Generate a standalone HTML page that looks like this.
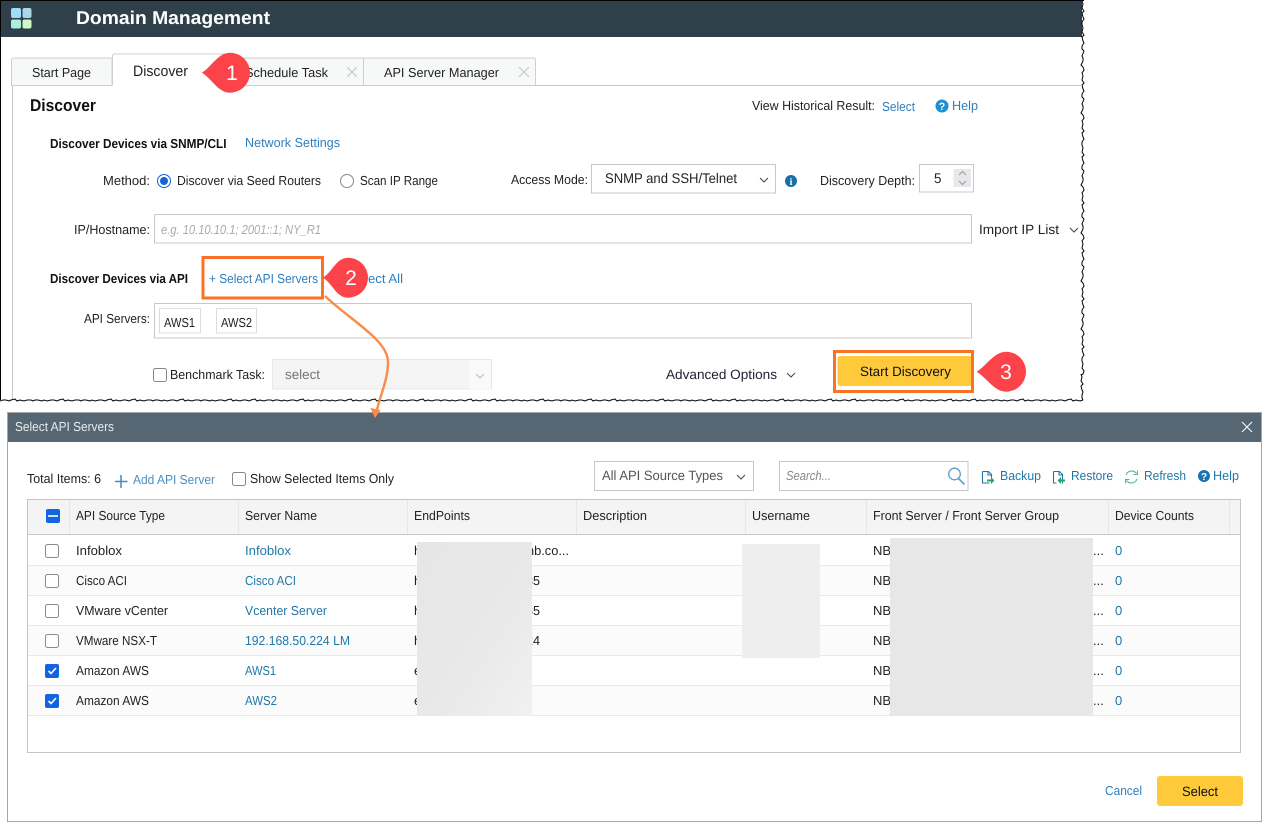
<!DOCTYPE html>
<html><head><meta charset="utf-8"><title>Domain Management</title>
<style>
html,body{margin:0;padding:0;background:#fff;width:1262px;height:822px;overflow:hidden}
svg{display:block}
text{font-family:"Liberation Sans",Arial,sans-serif;font-size:13px;fill:#222;white-space:pre;text-rendering:geometricPrecision}
.b{font-weight:bold;fill:#111}
.l{fill:#2f7fbf}
.d{fill:#1f78a8}
.g{fill:#555}
.n{font-size:21px;fill:#fff}
</style></head><body>
<svg width="1262" height="822" viewBox="0 0 1262 822" xmlns="http://www.w3.org/2000/svg">
<defs>
<linearGradient id="m1" x1="0" y1="0" x2="1" y2="1"><stop offset="0" stop-color="#e6e6e6"/><stop offset="0.6" stop-color="#e9e9e9"/><stop offset="1" stop-color="#f1f1f1"/></linearGradient>
</defs>
<rect width="1262" height="822" fill="#fff"/>
<!-- top bar -->
<rect x="1" y="1" width="1081" height="36" fill="#2f404b"/>
<rect x="0" y="0" width="1084" height="1" fill="#000"/>
<rect x="0" y="0" width="1" height="400" fill="#000"/>
<rect x="11" y="8" width="10" height="10" rx="2" fill="#9fdcf5"/>
<rect x="22.500" y="8" width="9" height="10" rx="2" fill="#a9d6e8"/>
<rect x="11" y="19.500" width="10" height="9" rx="2" fill="#aef0e0"/>
<rect x="22.500" y="19.500" width="9" height="9" rx="2" fill="#cff7c8"/>
<text x="76" y="24" textLength="194" lengthAdjust="spacingAndGlyphs" style="font-size:18.500px;font-weight:bold;fill:#fff">Domain Management</text>
<!-- jagged edges -->
<path fill="none" stroke="#000" stroke-width="1" d="M1082 1l1 3-1 4 2 3-2 2 1 4 1 2-2 3 0 3l1 3-1 4 2 3-2 2 1 4 1 2-2 3 0 3l2 2-2 5 1 2 0 3-2 4 2 2 1 3-2 3l1 3-1 4 2 3-2 2 1 4 1 2-2 3 0 3l2 2-2 5 1 2 0 3-2 4 2 2 1 3-2 3l1 3-1 4 2 3-2 2 1 4 1 2-2 3 0 3l1 3-1 4 2 3-2 2 1 4 1 2-2 3 0 3l2 2-2 5 1 2 0 3-2 4 2 2 1 3-2 3l1 3-1 4 2 3-2 2 1 4 1 2-2 3 0 3l2 2-2 5 1 2 0 3-2 4 2 2 1 3-2 3l1 3-1 4 2 3-2 2 1 4 1 2-2 3 0 3l2 2-2 5 1 2 0 3-2 4 2 2 1 3-2 3l1 3-1 4 2 3-2 2 1 4 1 2-2 3 0 3l2 2-2 5 1 2 0 3-2 4 2 2 1 3-2 3l1 3-1 4 2 3-2 2 1 4 1 2-2 3 0 3l1 3-1 4 2 3-1 3-2 1"/>
<path fill="none" stroke="#000" stroke-width="1" d="M1081 374l1 3-1 4 2 3-2 2 1 4 1 2-1 3 0 3 1 2"/>
<path fill="none" stroke="#000" stroke-width="1" d="M1083 400l-3 1-4-1-3 1-2-2-4 1-2 1-3-1-3 0l-4 1-3-1-2 1-4-1-3 0-2 1-2-1-4 0l-3 1-4-1-3 1-2-2-4 1-2 1-3-1-3 0l-4 1-3-1-2 1-4-1-3 0-2 1-2-1-4 0l-3 1-4-1-3 1-2-2-4 1-2 1-3-1-3 0l-3 1-4-1-3 1-2-2-4 1-2 1-3-1-3 0l-4 1-3-1-2 1-4-1-3 0-2 1-2-1-4 0l-3 1-4-1-3 1-2-2-4 1-2 1-3-1-3 0l-4 1-3-1-2 1-4-1-3 0-2 1-2-1-4 0l-3 1-4-1-3 1-2-2-4 1-2 1-3-1-3 0l-3 1-4-1-3 1-2-2-4 1-2 1-3-1-3 0l-4 1-3-1-2 1-4-1-3 0-2 1-2-1-4 0l-3 1-4-1-3 1-2-2-4 1-2 1-3-1-3 0l-4 1-3-1-2 1-4-1-3 0-2 1-2-1-4 0l-3 1-4-1-3 1-2-2-4 1-2 1-3-1-3 0l-3 1-4-1-3 1-2-2-4 1-2 1-3-1-3 0l-4 1-3-1-2 1-4-1-3 0-2 1-2-1-4 0l-3 1-4-1-3 1-2-2-4 1-2 1-3-1-3 0l-4 1-3-1-2 1-4-1-3 0-2 1-2-1-4 0l-3 1-4-1-3 1-2-2-4 1-2 1-3-1-3 0"/>
<path fill="none" stroke="#000" stroke-width="1" d="M603 400l-3 1-4-1-3 1-2-2-4 1-2 1-3-1-3 0l-4 1-3-1-2 1-4-1-3 0-2 1-2-1-4 0l-3 1-4-1-3 1-2-2-4 1-2 1-3-1-3 0l-4 1-3-1-2 1-4-1-3 0-2 1-2-1-4 0l-3 1-4-1-3 1-2-2-4 1-2 1-3-1-3 0l-3 1-4-1-3 1-2-2-4 1-2 1-3-1-3 0l-4 1-3-1-2 1-4-1-3 0-2 1-2-1-4 0l-3 1-4-1-3 1-2-2-4 1-2 1-3-1-3 0l-4 1-3-1-2 1-4-1-3 0-2 1-2-1-4 0l-3 1-4-1-3 1-2-2-4 1-2 1-3-1-3 0l-3 1-4-1-3 1-2-2-4 1-2 1-3-1-3 0l-4 1-3-1-2 1-4-1-3 0-2 1-2-1-4 0l-3 1-4-1-3 1-2-2-4 1-2 1-3-1-3 0l-4 1-3-1-2 1-4-1-3 0-2 1-2-1-4 0l-3 1-4-1-3 1-2-2-4 1-2 1-3-1-3 0l-3 1-4-1-3 1-2-2-4 1-2 1-3-1-3 0l-4 1-3-1-2 1-4-1-3 0-2 1-2-1-4 0l-3 1-4-1-3 1-2-2-4 1-2 1-3-1-3 0l-4 1-3-1-2 1-4-1-3 0-2 1-2-1-4 0l-3 1-4-1-3 1-2-2-4 1-2 1-3-1-3 0"/>
<path fill="none" stroke="#000" stroke-width="1" d="M123 400l-3 1-4-1-3 1-2-2-4 1-2 1-3-1-3 0l-4 1-3-1-2 1-4-1-3 0-2 1-2-1-4 0l-3 1-4-1-3 1-2-2-4 1-2 1-3-1-3 0l-4 1-3-1-2 1-4-1-3 0-2 1-2-1-4 0l-3 1-4-1-3 1-2-2-4 1-2 1-3-1-3 0l-3 1-4-1-3 1-2-2-4 1-2 1-3-1-3 0l-4 1-3-1-2 1-4-1-3 0-2 1-2-1-4 0"/>
<!-- panel -->
<path d="M12.500 399V85.500H1082" fill="none" stroke="#c8c8c8"/>
<!-- tabs -->
<path d="M11.500 85.500V60a2 2 0 0 1 2-2H112V85.500Z" fill="#f7f8f8" stroke="#cfcfcf"/>
<path d="M225 85.500V60a2 2 0 0 1 2-2H363.500V85.500Z" fill="#f7f8f8" stroke="#cfcfcf"/>
<path d="M363.500 85.500V58H533a2 2 0 0 1 2.500 2V85.500Z" fill="#f7f8f8" stroke="#cfcfcf"/>
<path d="M112.500 86V56a2 2 0 0 1 2-2H224a1.500 1.500 0 0 1 1 2V86Z" fill="#fff" stroke="none"/>
<path d="M112.500 85.500V56a2 2 0 0 1 2-2H223a2 2 0 0 1 2 2V85.500" fill="none" stroke="#cfcfcf"/>
<text x="32" y="77" textLength="59" lengthAdjust="spacingAndGlyphs">Start Page</text>
<text x="133" y="76" textLength="55" lengthAdjust="spacingAndGlyphs" style="font-size:15px">Discover</text>
<text x="245" y="77" textLength="83" lengthAdjust="spacingAndGlyphs">Schedule Task</text>
<text x="384" y="77" textLength="115" lengthAdjust="spacingAndGlyphs">API Server Manager</text>
<path d="M347 67l10 10M357 67l-10 10M519 67l10 10M529 67l-10 10" stroke="#c4c4c4" fill="none"/>
<!-- heading row -->
<text class="b" x="30" y="111" textLength="66" lengthAdjust="spacingAndGlyphs" style="font-size:17px">Discover</text>
<text x="752" y="110" textLength="123" lengthAdjust="spacingAndGlyphs">View Historical Result:</text>
<text class="l" x="882" y="111" textLength="33" lengthAdjust="spacingAndGlyphs">Select</text>
<circle cx="942" cy="106" r="6.500" fill="#1f90d0"/>
<text x="942" y="110" text-anchor="middle" style="font-size:10.500px;font-weight:bold;fill:#fff">?</text>
<text class="l" x="952" y="110" textLength="26" lengthAdjust="spacingAndGlyphs">Help</text>
<!-- SNMP -->
<text class="b" x="50" y="148" textLength="176.500" lengthAdjust="spacingAndGlyphs">Discover Devices via SNMP/CLI</text>
<text class="l" x="245" y="147" textLength="95" lengthAdjust="spacingAndGlyphs">Network Settings</text>
<text x="103" y="185" textLength="47" lengthAdjust="spacingAndGlyphs">Method:</text>
<circle cx="164" cy="181" r="6.500" fill="#fff" stroke="#1264d8"/>
<circle cx="164" cy="181" r="4" fill="#1264d8"/>
<text x="177" y="185" textLength="144" lengthAdjust="spacingAndGlyphs">Discover via Seed Routers</text>
<circle cx="347" cy="181" r="6.500" fill="#fff" stroke="#888"/>
<text x="360" y="185" textLength="78" lengthAdjust="spacingAndGlyphs">Scan IP Range</text>
<text x="511" y="184" textLength="77" lengthAdjust="spacingAndGlyphs">Access Mode:</text>
<rect x="591.500" y="164.500" width="184" height="28.500" fill="#fff" stroke="#c8c8c8"/>
<text x="605" y="183" textLength="132" lengthAdjust="spacingAndGlyphs" style="font-size:14px">SNMP and SSH/Telnet</text>
<path d="M760 178l4 4 4-4" fill="none" stroke="#444"/>
<circle cx="791" cy="181" r="6" fill="#1a6fa8"/>
<text x="791" y="185" text-anchor="middle" style="font-size:10px;font-weight:bold;fill:#fff;font-family:'Liberation Serif',serif">i</text>
<text x="820" y="185" textLength="95" lengthAdjust="spacingAndGlyphs">Discovery Depth:</text>
<rect x="919.500" y="164.500" width="54" height="27.500" fill="#fff" stroke="#c8c8c8"/>
<text x="934" y="183" textLength="7.500" lengthAdjust="spacingAndGlyphs" style="font-size:14px">5</text>
<rect x="953.500" y="169" width="17.500" height="18" fill="#e8e8ec"/>
<path d="M959 175l3.500-3.500 3.500 3.500M959 181l3.500 3.500 3.500-3.500" fill="none" stroke="#999"/>
<text x="74" y="234" textLength="76" lengthAdjust="spacingAndGlyphs">IP/Hostname:</text>
<rect x="154.500" y="214.500" width="817" height="28.500" fill="#fff" stroke="#c8c8c8"/>
<text x="161" y="234" textLength="160" lengthAdjust="spacingAndGlyphs" style="font-style:italic;fill:#aaa">e.g. 10.10.10.1; 2001::1; NY_R1</text>
<text x="979" y="234" textLength="80" lengthAdjust="spacingAndGlyphs" style="font-size:13.500px">Import IP List</text>
<path d="M1070 228l4 4 4-4" fill="none" stroke="#444"/>
<!-- API -->
<text class="b" x="50" y="283" textLength="138" lengthAdjust="spacingAndGlyphs">Discover Devices via API</text>
<text class="l" x="209" y="283" textLength="109" lengthAdjust="spacingAndGlyphs">+ Select API Servers</text>
<text class="l" x="368" y="283" textLength="35" lengthAdjust="spacingAndGlyphs">ect All</text>
<rect x="203" y="257.500" width="119.500" height="40.500" fill="none" stroke="#f97226" stroke-width="3"/>
<text x="84" y="323" textLength="66" lengthAdjust="spacingAndGlyphs">API Servers:</text>
<rect x="154.500" y="303.500" width="817" height="34.500" fill="#fff" stroke="#c8c8c8"/>
<rect x="159.500" y="308.500" width="41" height="24.500" fill="#fff" stroke="#ddd"/>
<text x="164" y="327" textLength="31" lengthAdjust="spacingAndGlyphs">AWS1</text>
<rect x="216.500" y="308.500" width="40" height="24.500" fill="#fff" stroke="#ddd"/>
<text x="221" y="327" textLength="31" lengthAdjust="spacingAndGlyphs">AWS2</text>
<rect x="153.500" y="368.500" width="13" height="13" rx="2" fill="#fff" stroke="#888"/>
<text x="170" y="379" textLength="95" lengthAdjust="spacingAndGlyphs">Benchmark Task:</text>
<rect x="272.500" y="359.500" width="219" height="29.500" fill="#f5f5f5" stroke="#e8e8e8"/>
<rect x="470" y="360" width="21" height="29" fill="#fafafa"/>
<text x="285" y="379" textLength="35" lengthAdjust="spacingAndGlyphs" style="fill:#777;font-size:13.500px">select</text>
<path d="M476 374l4 4 4-4" fill="none" stroke="#bbb"/>
<text x="666" y="379" textLength="111" lengthAdjust="spacingAndGlyphs" style="fill:#223;font-size:13.500px">Advanced Options</text>
<path d="M787 373l4 4 4-4" fill="none" stroke="#444"/>
<path d="M837.500 359a3 3 0 0 1 3-3H971V386H840.500a3 3 0 0 1-3-3Z" fill="#ffc93c"/>
<text x="860" y="376" textLength="91" lengthAdjust="spacingAndGlyphs" style="fill:#111;font-size:13.500px">Start Discovery</text>
<rect x="834.500" y="351.500" width="138" height="40" fill="none" stroke="#f97226" stroke-width="3"/>
<!-- dialog -->
<rect x="7.500" y="412.500" width="1254" height="409" fill="#fff" stroke="#a6a6a6"/>
<rect x="8" y="413" width="1253" height="29" fill="#566773"/>
<text x="15" y="431" textLength="99" lengthAdjust="spacingAndGlyphs" style="fill:#e6ebee">Select API Servers</text>
<path d="M1242 422l10 10M1252 422l-10 10" stroke="#fff" fill="none"/>
<text x="27" y="483" textLength="74" lengthAdjust="spacingAndGlyphs">Total Items: 6</text>
<path d="M121 475v13M115 481.500h12.500" stroke="#3d8cc4" stroke-width="1.500" fill="none"/>
<text class="l" x="133" y="484" textLength="82" lengthAdjust="spacingAndGlyphs" style="fill:#4a90c4">Add API Server</text>
<rect x="232.500" y="472.500" width="13" height="13" rx="2" fill="#fff" stroke="#888"/>
<text x="250" y="483" textLength="144" lengthAdjust="spacingAndGlyphs">Show Selected Items Only</text>
<rect x="594.500" y="461.500" width="159" height="29" fill="#fff" stroke="#c8c8c8"/>
<text class="g" x="602" y="480" textLength="121" lengthAdjust="spacingAndGlyphs" style="font-size:13.500px">All API Source Types</text>
<path d="M737 475l4 4 4-4" fill="none" stroke="#444"/>
<rect x="779.500" y="461.500" width="188.500" height="29" fill="#fff" stroke="#c8c8c8"/>
<text x="786" y="480" textLength="45" lengthAdjust="spacingAndGlyphs" style="font-style:italic;fill:#888">Search...</text>
<circle cx="954.500" cy="474" r="5.800" fill="none" stroke="#5c9ccb" stroke-width="1.300"/>
<path d="M958.500 478.500l6 6" stroke="#5c9ccb" stroke-width="1.600"/>
<!-- backup / restore / refresh -->
<path d="M982.500 471.500h6l3 3v3M982.500 471.500v11.500h7M988 471.500v3.500h3.500" fill="none" stroke="#1f78a8" stroke-width="1.100"/>
<path d="M987 479.500h4v-2.500l3.500 3.500-3.500 3.500v-2.500h-4Z" fill="#2aa55c"/>
<text class="d" x="1000" y="480" textLength="41" lengthAdjust="spacingAndGlyphs">Backup</text>
<path d="M1053.500 471.500h6l3 3v9M1053.500 471.500v11.500h3M1059 471.500v3.500h3.500" fill="none" stroke="#1f78a8" stroke-width="1.100"/>
<path d="M1065 479.500h-4v-2.500l-3.500 3.500 3.500 3.500v-2.500h4Z" fill="#2aa55c"/>
<text class="d" x="1071" y="480" textLength="42" lengthAdjust="spacingAndGlyphs">Restore</text>
<path d="M1126 475a6 6 0 0 1 10.500-1.500M1137 479a6 6 0 0 1-10.500 1.500" fill="none" stroke="#4dbd85" stroke-width="1.100"/>
<path d="M1137.500 470.500v4h-4M1125.500 483.500v-4h4" fill="none" stroke="#4dbd85" stroke-width="1"/>
<text class="d" x="1144" y="480" textLength="42" lengthAdjust="spacingAndGlyphs">Refresh</text>
<circle cx="1204" cy="476" r="6" fill="#1b73b3"/>
<text x="1204" y="480" text-anchor="middle" style="font-size:10px;font-weight:bold;fill:#fff">?</text>
<text class="d" x="1213" y="480" textLength="26" lengthAdjust="spacingAndGlyphs">Help</text>
<!-- table -->
<rect x="27.500" y="499.500" width="1213" height="253" fill="#fff" stroke="#c4c4c4"/>
<rect x="28" y="500" width="1212" height="34" fill="#f4f4f4"/>
<rect x="28" y="534" width="1212" height="1" fill="#c8c8c8"/>
<path d="M69.500 500v34M238.500 500v34M407.500 500v34M576.500 500v34M745.500 500v34M866.500 500v34M1108.500 500v34M1229.500 500v34" stroke="#e6e6e6"/>
<rect x="28" y="566" width="1212" height="29" fill="#fbfbfb"/>
<rect x="28" y="626" width="1212" height="29" fill="#fbfbfb"/>
<rect x="28" y="686" width="1212" height="29" fill="#fbfbfb"/>
<path d="M28 565.500h1212M28 595.500h1212M28 625.500h1212M28 655.500h1212M28 685.500h1212M28 715.500h1212" stroke="#e8e8e8"/>
<rect x="46" y="509" width="14" height="14" rx="2" fill="#1264e0"/>
<rect x="48" y="515" width="10" height="2" fill="#cfe0fa"/>
<text x="76" y="520" textLength="89" lengthAdjust="spacingAndGlyphs">API Source Type</text>
<text x="245" y="520" textLength="72" lengthAdjust="spacingAndGlyphs">Server Name</text>
<text x="414" y="520" textLength="56" lengthAdjust="spacingAndGlyphs">EndPoints</text>
<text x="583" y="520" textLength="64" lengthAdjust="spacingAndGlyphs">Description</text>
<text x="752" y="520" textLength="58" lengthAdjust="spacingAndGlyphs">Username</text>
<text x="873" y="520" textLength="186" lengthAdjust="spacingAndGlyphs">Front Server / Front Server Group</text>
<text x="1115" y="520" textLength="79" lengthAdjust="spacingAndGlyphs">Device Counts</text>
<!-- checkboxes -->
<rect x="45.500" y="544.500" width="13" height="13" rx="2" fill="#fff" stroke="#8a8a8a"/>
<rect x="45.500" y="574.500" width="13" height="13" rx="2" fill="#fff" stroke="#8a8a8a"/>
<rect x="45.500" y="604.500" width="13" height="13" rx="2" fill="#fff" stroke="#8a8a8a"/>
<rect x="45.500" y="634.500" width="13" height="13" rx="2" fill="#fff" stroke="#8a8a8a"/>
<rect x="45" y="664" width="14" height="14" rx="2" fill="#1264e0"/>
<rect x="45" y="694" width="14" height="14" rx="2" fill="#1264e0"/>
<path d="M48.500 671l2.500 2.500 5-5.500M48.500 701l2.500 2.500 5-5.500" fill="none" stroke="#fff" stroke-width="1.600"/>
<!-- rows -->
<text x="76" y="555" textLength="46" lengthAdjust="spacingAndGlyphs">Infoblox</text>
<text x="76" y="585" textLength="51" lengthAdjust="spacingAndGlyphs">Cisco ACI</text>
<text x="76" y="615" textLength="92" lengthAdjust="spacingAndGlyphs">VMware vCenter</text>
<text x="76" y="645" textLength="81" lengthAdjust="spacingAndGlyphs">VMware NSX-T</text>
<text x="76" y="675" textLength="73" lengthAdjust="spacingAndGlyphs">Amazon AWS</text>
<text x="76" y="705" textLength="73" lengthAdjust="spacingAndGlyphs">Amazon AWS</text>
<text class="d" x="245" y="555" textLength="46" lengthAdjust="spacingAndGlyphs">Infoblox</text>
<text class="d" x="245" y="585" textLength="51" lengthAdjust="spacingAndGlyphs">Cisco ACI</text>
<text class="d" x="245" y="615" textLength="82" lengthAdjust="spacingAndGlyphs">Vcenter Server</text>
<text class="d" x="245" y="645" textLength="105" lengthAdjust="spacingAndGlyphs">192.168.50.224 LM</text>
<text class="d" x="245" y="675" textLength="31" lengthAdjust="spacingAndGlyphs">AWS1</text>
<text class="d" x="245" y="705" textLength="32" lengthAdjust="spacingAndGlyphs">AWS2</text>
<text x="414" y="555">h</text><text x="414" y="585">h</text><text x="414" y="615">h</text><text x="414" y="645">h</text><text x="414" y="675">e</text><text x="414" y="705">e</text>
<text x="527" y="555" textLength="42" lengthAdjust="spacingAndGlyphs">nb.co...</text>
<text x="526" y="585" textLength="14" lengthAdjust="spacingAndGlyphs">35</text>
<text x="526" y="615" textLength="14" lengthAdjust="spacingAndGlyphs">35</text>
<text x="526" y="645" textLength="14" lengthAdjust="spacingAndGlyphs">24</text>
<text x="873" y="555">NB</text><text x="873" y="585">NB</text><text x="873" y="615">NB</text><text x="873" y="645">NB</text><text x="873" y="675">NB</text><text x="873" y="705">NB</text>
<text x="1093" y="555">...</text><text x="1093" y="585">...</text><text x="1093" y="615">...</text><text x="1093" y="645">...</text><text x="1093" y="675">...</text><text x="1093" y="705">...</text>
<text class="d" x="1115" y="555">0</text><text class="d" x="1115" y="585">0</text><text class="d" x="1115" y="615">0</text><text class="d" x="1115" y="645">0</text><text class="d" x="1115" y="675">0</text><text class="d" x="1115" y="705">0</text>
<!-- masks -->
<rect x="417" y="542" width="115" height="174" fill="url(#m1)"/>
<rect x="742" y="544" width="78" height="114" fill="#eeeeee"/>
<rect x="890" y="538" width="203" height="178" fill="#e7e7e7"/>
<!-- footer -->
<text class="l" x="1105" y="795" textLength="37" lengthAdjust="spacingAndGlyphs">Cancel</text>
<rect x="1157" y="776" width="86" height="30" rx="3" fill="#ffc93c"/>
<text x="1182" y="796" textLength="36" lengthAdjust="spacingAndGlyphs" style="fill:#111;font-size:13.500px">Select</text>
<!-- arrow -->
<path d="M325 296C350 320 388 340 388 362C388 380 380 395 376 414" fill="none" stroke="#f98c4b" stroke-width="2.400"/>
<path d="M371 408l4 9 5-7" fill="#f98c4b" stroke="#f98c4b"/>
<!-- badges -->
<path d="M202 72.700C212 66 218 53 230 52.700A20 20 0 0 1 230 92.700C218 92.500 212 79 202 72.700Z" fill="#fc4349"/>
<text class="n" x="232" y="80" text-anchor="middle">1</text>
<path d="M323 277.700C333 271 336 258 348 257.700A20 20 0 0 1 348 297.700C336 297.500 333 284 323 277.700Z" fill="#fc4349"/>
<text class="n" x="351" y="285" text-anchor="middle">2</text>
<path d="M976.700 371.700C987 365 994 352 1006 351.700A20 20 0 0 1 1006 391.700C994 391.500 987 378 976.700 371.700Z" fill="#fc4349"/>
<text class="n" x="1006" y="379" text-anchor="middle">3</text>
</svg>
</body></html>
